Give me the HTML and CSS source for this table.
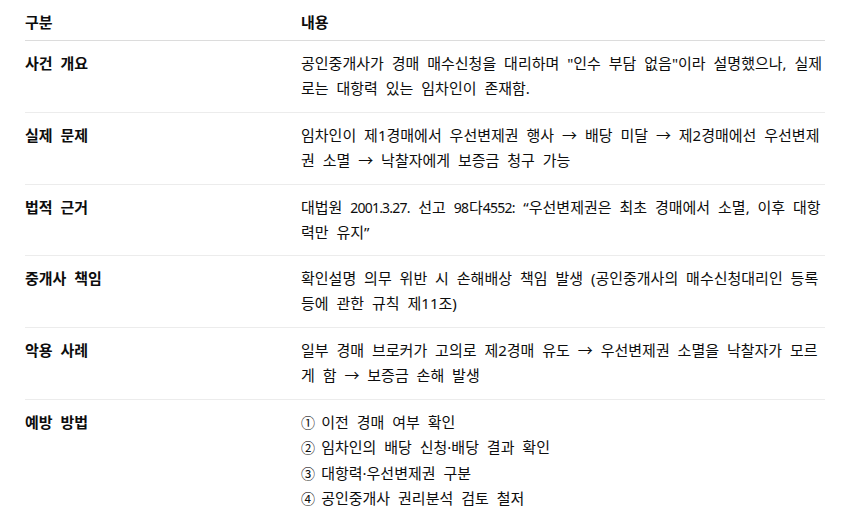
FILE: index.html
```html
<!DOCTYPE html>
<html lang="ko">
<head>
<meta charset="utf-8">
<link rel="stylesheet" href="styles.css">
</head>
<body>
<table class="info-table">
  <colgroup><col class="col-key"><col class="col-val"></colgroup>
  <thead>
    <tr><th>구분</th><th>내용</th></tr>
  </thead>
  <tbody>
    <tr><td class="key">사건 개요</td><td>공인중개사가 경매 매수신청을 대리하며 "인수 부담 없음"이라 설명했으나, 실제로는 대항력 있는 임차인이 존재함.</td></tr>
    <tr><td class="key">실제 문제</td><td>임차인이 제1경매에서 우선변제권 행사 → 배당 미달 → 제2경매에선 우선변제권 소멸 → 낙찰자에게 보증금 청구 가능</td></tr>
    <tr><td class="key">법적 근거</td><td>대법원 <span class="num">2001.3.27.</span> 선고 <span class="num">98</span>다<span class="num">4552:</span> “우선변제권은 최초 경매에서 소멸, 이후 대항력만 유지”</td></tr>
    <tr><td class="key">중개사 책임</td><td>확인설명 의무 위반 시 손해배상 책임 발생 (공인중개사의 매수신청대리인 등록 등에 관한 규칙 제11조)</td></tr>
    <tr><td class="key">악용 사례</td><td>일부 경매 브로커가 고의로 제2경매 유도 → 우선변제권 소멸을 낙찰자가 모르게 함 → 보증금 손해 발생</td></tr>
    <tr class="last"><td class="key">예방 방법</td><td class="steps"><div class="step"><span class="mark">① </span>이전 경매 여부 확인</div><div class="step"><span class="mark">② </span>임차인의 배당 신청·배당 결과 확인</div><div class="step"><span class="mark">③ </span>대항력·우선변제권 구분</div><div class="step"><span class="mark">④ </span>공인중개사 권리분석 검토 철저</div></td></tr>
  </tbody>
</table>
</body>
</html>
```

FILE: styles.css
```css
html, body {
  margin: 0;
  padding: 0;
  background: #ffffff;
}
body {
  font-family: "Noto Sans", "Noto Sans CJK KR", sans-serif;
  font-size: 15px;
  color: #0d0d0d;
}
.info-table {
  border-collapse: collapse;
  table-layout: fixed;
  width: 800px;
  margin: 0 0 0 25px;
  word-spacing: 4px;
}
.col-key { width: 276px; }
.col-val { width: 524px; }
.info-table th {
  text-align: left;
  font-weight: 700;
  line-height: 25px;
  padding: 10px 0 5px 0;
  border-bottom: 1px solid #dcdcdc;
  vertical-align: top;
}
.info-table td {
  line-height: 25px;
  padding: 10px 0 10.8px 0;
  vertical-align: top;
  border-bottom: 1px solid #ececec;
}
.info-table td.key {
  font-weight: 700;
}
.num {
  font-size: 14px;
  letter-spacing: -0.8px;
  padding-right: 0.8px;
}
.step {
  line-height: 25.3px;
}
.mark {
  font-size: 14px;
  word-spacing: 2.5px;
}
.info-table tr.last td {
  border-bottom: none;
}
```
